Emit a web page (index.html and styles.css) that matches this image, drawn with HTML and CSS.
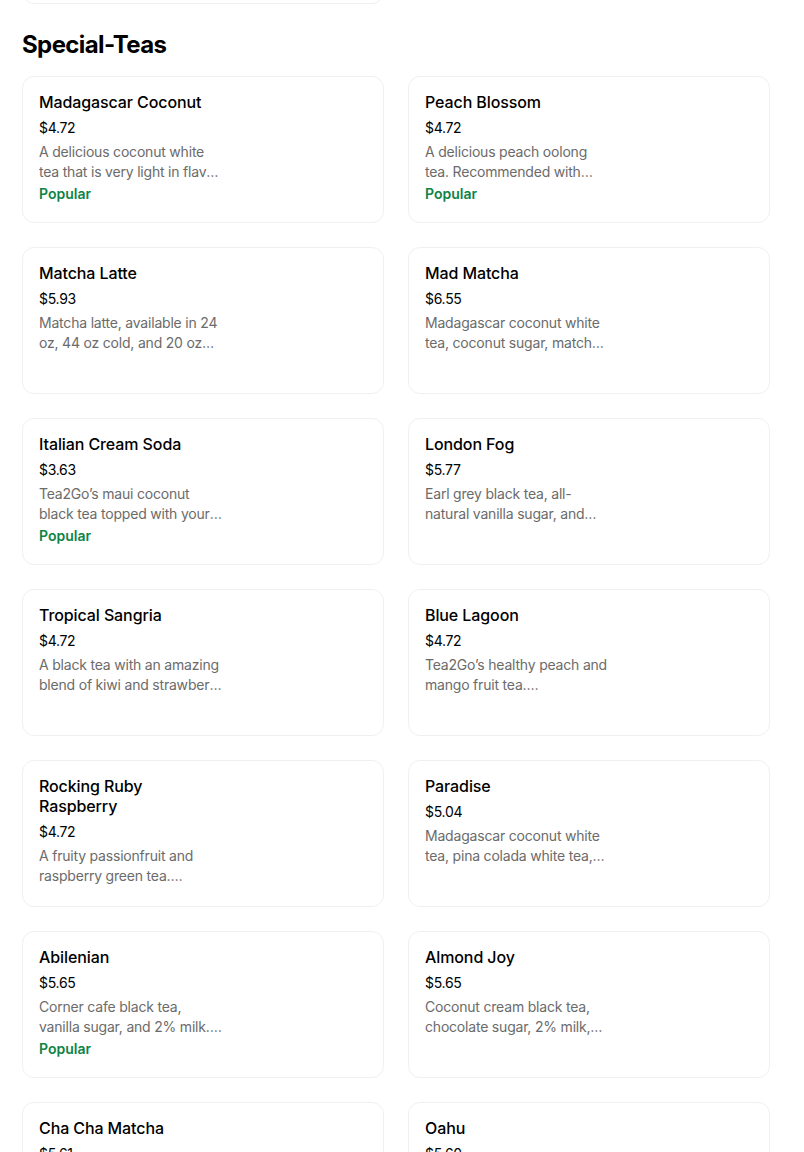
FILE: index.html
```html
<!DOCTYPE html>
<html lang="en">
<head>
<meta charset="utf-8">
<title>Special-Teas</title>
<link rel="stylesheet" href="styles.css">
</head>
<body>
<div class="page">
  <div class="grid prev">
    <div class="card tail"></div>
  </div>
  <h2 class="section-title">Special-Teas</h2>
  <div class="grid">
    <div class="card">
      <div class="name">Madagascar Coconut</div>
      <div class="price">$4.72</div>
      <div class="desc">A delicious coconut white tea that is very light in flavor and refreshing.</div>
      <div class="tag">Popular</div>
    </div>
    <div class="card">
      <div class="name">Peach Blossom</div>
      <div class="price">$4.72</div>
      <div class="desc">A delicious peach oolong tea. Recommended with boba.</div>
      <div class="tag">Popular</div>
    </div>
    <div class="card">
      <div class="name">Matcha Latte</div>
      <div class="price">$5.93</div>
      <div class="desc">Matcha latte, available in 24 oz, 44 oz cold, and 20 oz hot.</div>
    </div>
    <div class="card">
      <div class="name">Mad Matcha</div>
      <div class="price">$6.55</div>
      <div class="desc">Madagascar coconut white tea, coconut sugar, matcha and milk.</div>
    </div>
    <div class="card">
      <div class="name">Italian Cream Soda</div>
      <div class="price">$3.63</div>
      <div class="desc">Tea2Go’s maui coconut black tea topped with your choice of flavor.</div>
      <div class="tag">Popular</div>
    </div>
    <div class="card">
      <div class="name">London Fog</div>
      <div class="price">$5.77</div>
      <div class="desc">Earl grey black tea, all-natural vanilla sugar, and steamed milk.</div>
    </div>
    <div class="card">
      <div class="name">Tropical Sangria</div>
      <div class="price">$4.72</div>
      <div class="desc">A black tea with an amazing blend of kiwi and strawberry flavors.</div>
    </div>
    <div class="card">
      <div class="name">Blue Lagoon</div>
      <div class="price">$4.72</div>
      <div class="desc">Tea2Go’s healthy peach and mango fruit tea.<br>Refreshing and light, with real fruit.</div>
    </div>
    <div class="card">
      <div class="name">Rocking Ruby Raspberry</div>
      <div class="price">$4.72</div>
      <div class="desc">A fruity passionfruit and raspberry green tea.<br>Delicious and refreshing over ice.</div>
    </div>
    <div class="card">
      <div class="name">Paradise</div>
      <div class="price">$5.04</div>
      <div class="desc">Madagascar coconut white tea, pina colada white tea, and more.</div>
    </div>
    <div class="card">
      <div class="name">Abilenian</div>
      <div class="price">$5.65</div>
      <div class="desc">Corner cafe black tea, vanilla sugar, and 2% milk.<br>Delicious.</div>
      <div class="tag">Popular</div>
    </div>
    <div class="card">
      <div class="name">Almond Joy</div>
      <div class="price">$5.65</div>
      <div class="desc">Coconut cream black tea, chocolate sugar, 2% milk, and almond.</div>
    </div>
    <div class="card">
      <div class="name">Cha Cha Matcha</div>
      <div class="price">$5.61</div>
      <div class="desc">Matcha green tea with chai spices and milk.</div>
    </div>
    <div class="card">
      <div class="name">Oahu</div>
      <div class="price">$5.60</div>
      <div class="desc">Coconut and pineapple tea with a tropical twist.</div>
    </div>
  </div>
</div>
</body>
</html>
```

FILE: styles.css
```css
html, body {
  margin: 0;
  padding: 0;
  background: #ffffff;
}

body {
  font-family: "Inter", "Roboto", "Liberation Sans", sans-serif;
  color: #000000;
  overflow: hidden;
  height: 1152px;
}

.page {
  padding: 0 34px 0 22px;
}

.grid {
  display: grid;
  grid-template-columns: 1fr 1fr;
  column-gap: 24px;
  row-gap: 24px;
}

.prev {
  margin-top: -143px;
}

.card {
  border: 1px solid #f0f0f0;
  border-radius: 12px;
  padding: 15px 16px 0 16px;
  box-sizing: border-box;
  height: 147px;
  background: #fff;
}

.section-title {
  margin: 26px 0 16px 0;
  font-size: 24px;
  line-height: 30px;
  font-weight: 700;
  letter-spacing: -0.6px;
}

.name {
  font-size: 16px;
  line-height: 20px;
  font-weight: 500;
  max-width: 175px;
  letter-spacing: -0.1px;
}

.price {
  font-size: 14px;
  line-height: 20px;
  margin-top: 6px;
  letter-spacing: -0.3px;
}

.desc {
  font-size: 14px;
  line-height: 20px;
  color: #6b6b6b;
  margin-top: 4px;
  max-width: 184px;
  letter-spacing: -0.2px;
  display: -webkit-box;
  -webkit-line-clamp: 2;
  -webkit-box-orient: vertical;
  overflow: hidden;
}

.tag {
  font-size: 14px;
  line-height: 20px;
  font-weight: 600;
  color: #0e8345;
  margin-top: 2px;
}
```
